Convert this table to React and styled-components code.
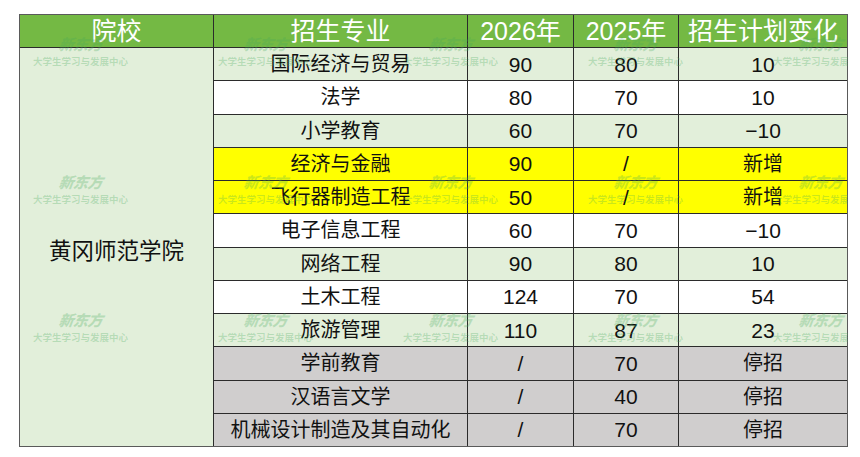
import React from "react";
import styled, { createGlobalStyle } from "styled-components";

const Global = createGlobalStyle`
  html, body { margin: 0; padding: 0; background: #ffffff; }
  body { font-family: "Liberation Sans", "Noto Sans CJK SC", sans-serif; }
`;

const Page = styled.div`
  width: 860px;
  height: 457px;
  padding: 14px 0 0 19px;
  box-sizing: border-box;
`;

const Frame = styled.div`
  position: relative;
  width: 829px;
  height: 433px;
  overflow: hidden;
`;

const Grid = styled.div`
  box-sizing: border-box;
  width: 100%;
  height: 100%;
  display: grid;
  grid-template-columns: 193px 253px 105px 104px 168px;
  grid-template-rows: 32px repeat(12, 1fr);
  gap: 1px;
  background: #2b2b2b;
  border: 1px solid #5a5a5a;
`;

const Head = styled.div`
  background: #74b944;
  color: #ffffff;
  font-size: 25px;
  display: flex;
  align-items: center;
  justify-content: center;
  line-height: 1;
  padding-top: 1px;
`;

const bg = {
  green: "#e2efda",
  white: "#ffffff",
  yellow: "#ffff00",
  grey: "#d0cece",
};

const Cell = styled.div`
  background: ${(p) => bg[p.$tone]};
  color: #111111;
  font-size: ${(p) => (p.$num ? "21px" : "20px")};
  display: flex;
  align-items: center;
  justify-content: center;
  line-height: 1;
  white-space: nowrap;
`;

const School = styled.div`
  grid-row: 2 / span 12;
  background: #e2efda;
  color: #111111;
  font-size: 22.5px;
  display: flex;
  align-items: center;
  justify-content: center;
  padding-top: 4px;
`;

const Overlay = styled.div`
  position: absolute;
  inset: 0;
  pointer-events: none;
  display: grid;
  grid-template-columns: repeat(5, 185px);
  grid-auto-rows: 138px;
  padding: 22px 0 0 14px;
`;

const Mark = styled.div`
  width: 95px;
  display: flex;
  flex-direction: column;
  align-items: center;
  gap: 6px;
  color: rgba(70, 170, 90, 0.28);
  font-family: "Noto Sans CJK SC", sans-serif;
`;

const Logo = styled.span`
  font-size: 15px;
  font-weight: 900;
  font-style: italic;
  letter-spacing: -0.5px;
  line-height: 1;
  transform: skewX(-8deg);
`;

const Slogan = styled.span`
  font-size: 9.5px;
  font-weight: 700;
  line-height: 1;
  white-space: nowrap;
`;

const rows = [
  ["国际经济与贸易", "90", "80", "10", "green"],
  ["法学", "80", "70", "10", "white"],
  ["小学教育", "60", "70", "−10", "green"],
  ["经济与金融", "90", "/", "新增", "yellow"],
  ["飞行器制造工程", "50", "/", "新增", "yellow"],
  ["电子信息工程", "60", "70", "−10", "white"],
  ["网络工程", "90", "80", "10", "green"],
  ["土木工程", "124", "70", "54", "white"],
  ["旅游管理", "110", "87", "23", "green"],
  ["学前教育", "/", "70", "停招", "grey"],
  ["汉语言文学", "/", "40", "停招", "grey"],
  ["机械设计制造及其自动化", "/", "70", "停招", "grey"],
];

const isNum = (s) => /^[−\d/]+$/.test(s);

export default function App() {
  return (
    <Page>
      <Global />
      <Frame>
        <Grid>
          <Head>院校</Head>
          <Head>招生专业</Head>
          <Head>2026年</Head>
          <Head>2025年</Head>
          <Head>招生计划变化</Head>
          {rows.map((r, i) => (
            <React.Fragment key={i}>
              {i === 0 && <School>黄冈师范学院</School>}
              <Cell $tone={r[4]}>{r[0]}</Cell>
              <Cell $tone={r[4]} $num={isNum(r[1])}>{r[1]}</Cell>
              <Cell $tone={r[4]} $num={isNum(r[2])}>{r[2]}</Cell>
              <Cell $tone={r[4]} $num={isNum(r[3])}>{r[3]}</Cell>
            </React.Fragment>
          ))}
        </Grid>
        <Overlay>
          {Array.from({ length: 15 }).map((_, i) => (
            <Mark key={i}>
              <Logo>新东方</Logo>
              <Slogan>大学生学习与发展中心</Slogan>
            </Mark>
          ))}
        </Overlay>
      </Frame>
    </Page>
  );
}
